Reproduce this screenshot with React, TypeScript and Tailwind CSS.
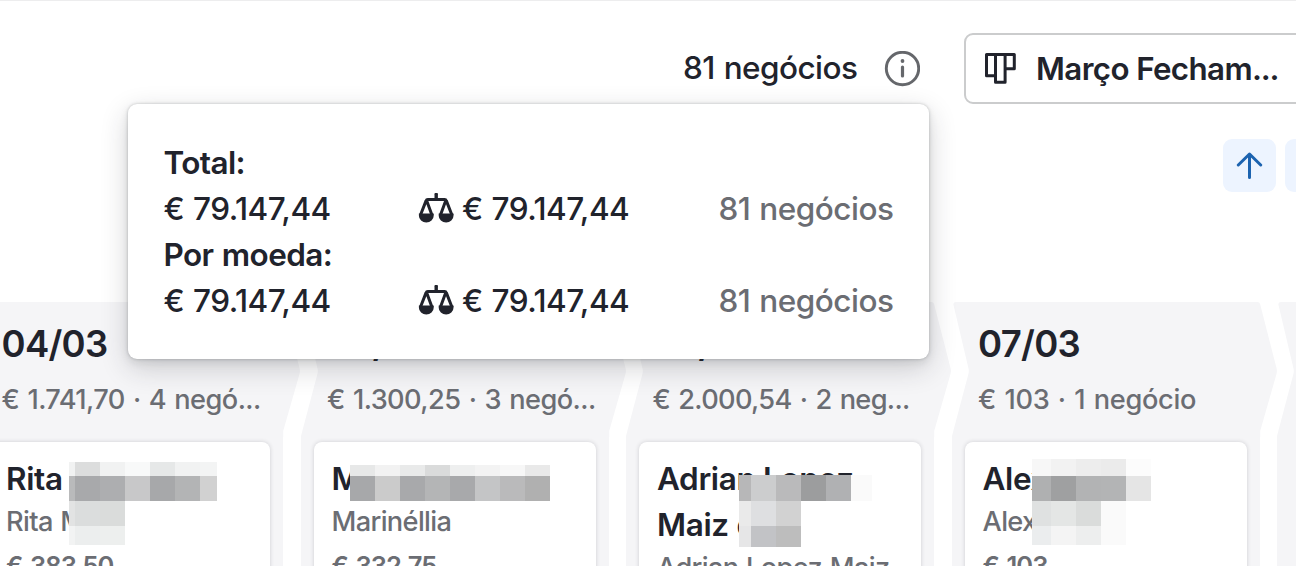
import { FC, ReactNode } from 'react'

type MosaicRow = {
  height: number
  cells: [width: number, color: string][]
}

type Deal = {
  title: ReactNode
  contact: string
  amount?: string
  mosaic: MosaicRow[]
  mosaicClass: string
}

type Stage = {
  name: string
  summary: string
  summaryClass: string
  deal?: Deal
}

const STAGES: Stage[] = [
  {
    name: '04/03',
    summary: '€ 1.741,70 · 4 negó...',
    summaryClass: 'tracking-[-0.56px]',
    deal: {
      title: 'Rita',
      contact: 'Rita M',
      amount: '€ 383,50',
      mosaicClass: 'left-[81px] top-[20px]',
      mosaic: [
        {
          height: 14,
          cells: [[6, '#f1f2f2'], [25, '#dcdddd'], [25, '#f1f2f2'], [25, '#f8f9f9'], [25, '#e6e8e8'], [25, '#f1f2f2'], [17, '#f3f4f4']],
        },
        {
          height: 25,
          cells: [[6, '#b9babb'], [25, '#a8a9ab'], [25, '#adaeb0'], [25, '#c8c8c9'], [25, '#a7a8aa'], [25, '#b3b4b5'], [17, '#d1d1d1']],
        },
        { height: 25, cells: [[6, '#e2e3e3'], [25, '#dbdddd'], [25, '#dadcdb']] },
        { height: 19, cells: [[6, '#f2f3f3'], [25, '#eceeee'], [25, '#edefee']] },
      ],
    },
  },
  {
    name: '05/03',
    summary: '€ 1.300,25 · 3 negó...',
    summaryClass: 'tracking-[-0.56px]',
    deal: {
      title: 'M',
      contact: 'Marinéllia',
      amount: '€ 332,75',
      mosaicClass: 'left-[36.5px] top-[23px]',
      mosaic: [
        {
          height: 11,
          cells: [[25, '#e7e8e8'], [25, '#f2f2f2'], [25, '#e9eaea'], [25, '#dadbdb'], [25, '#eeefef'], [25, '#f3f3f3'], [25, '#f7f7f7'], [25, '#e9e9e9']],
        },
        {
          height: 25,
          cells: [[25, '#a7a8aa'], [25, '#cbcbcb'], [25, '#a8a9ab'], [25, '#b4b5b6'], [25, '#a8a9ab'], [25, '#c4c5c6'], [25, '#bababb'], [25, '#b0b0b0']],
        },
      ],
    },
  },
  {
    name: '06/03',
    summary: '€ 2.000,54 · 2 neg...',
    summaryClass: 'tracking-[-0.66px]',
    deal: {
      title: (
        <>
          Adrian Lopez
          <br />
          Maiz d
        </>
      ),
      contact: 'Adrian Lopez Maiz',
      mosaicClass: 'left-[99.5px] top-[33px]',
      mosaic: [
        {
          height: 26,
          cells: [[12, '#b7b7b8'], [25, '#cccdce'], [25, '#bababb'], [25, '#9c9d9e'], [25, '#b0b1b3'], [21, '#fafafa']],
        },
        { height: 25, cells: [[12, '#eaeaea'], [25, '#dedfe1'], [25, '#d2d2d2']] },
        { height: 21, cells: [[12, '#e6e6e7'], [25, '#c2c3c6'], [25, '#bdbdbd']] },
      ],
    },
  },
  {
    name: '07/03',
    summary: '€ 103 · 1 negócio',
    summaryClass: 'tracking-[-0.3px]',
    deal: {
      title: 'Alex',
      contact: 'Alex',
      amount: '€ 103',
      mosaicClass: 'left-[67.5px] top-[17px]',
      mosaic: [
        { height: 17, cells: [[19, '#f7f7f7'], [25, '#f2f2f2'], [25, '#ededed'], [25, '#ebebeb'], [25, '#fcfcfc']] },
        { height: 25, cells: [[19, '#afb0b1'], [25, '#9fa0a1'], [25, '#b2b3b4'], [25, '#b3b4b5'], [25, '#e5e5e5']] },
        { height: 25, cells: [[19, '#dfe1e1'], [25, '#e4e6e5'], [25, '#dadcdb'], [25, '#fafafa']] },
        { height: 19, cells: [[19, '#ebedee'], [25, '#f4f4f4'], [25, '#edeeee'], [25, '#fafafa']] },
      ],
    },
  },
  { name: '', summary: '', summaryClass: '' },
]

const TOTALS = [
  { label: 'Total:', value: '€ 79.147,44', weighted: '€ 79.147,44', count: '81 negócios' },
  { label: 'Por moeda:', value: '€ 79.147,44', weighted: '€ 79.147,44', count: '81 negócios' },
]

const InfoIcon: FC = () => (
  <svg className="h-9 w-9 shrink-0" viewBox="0 0 36 36" fill="none">
    <circle cx="18.5" cy="17.5" r="16.2" stroke="#65676b" strokeWidth="2.9" />
    <circle cx="18.5" cy="10" r="1.9" fill="#65676b" />
    <path d="M18.5 16v9" stroke="#65676b" strokeWidth="3.2" strokeLinecap="round" />
  </svg>
)

const PipelineIcon: FC = () => (
  <svg className="h-8 w-8 shrink-0" viewBox="0 0 32 32" fill="none" stroke="#21232c" strokeWidth="3" strokeLinejoin="round">
    <path d="M2.5 1.500h9v21.200h-9zM11.500 1.500h9.600v27.700h-9.600zM21.100 1.500h9.200v14.200h-9.200z" />
  </svg>
)

const ScalesIcon: FC = () => (
  <svg className="h-8 w-9 shrink-0" viewBox="0 0 36 32" fill="none">
    <path d="M18.2 1.300v5" stroke="#21232c" strokeWidth="3.4" strokeLinecap="round" />
    <path
      d="M2.300 22.500 8 7.900Q8.500 6.500 9.800 6.500h16.800q1.300 0 1.800 1.400L34.100 22.500M8.800 8l5.300 14.500M27.600 8 22.300 22.500"
      stroke="#21232c"
      strokeWidth="3"
    />
    <path d="M.9 20.500h14.800v2.300a7.400 6.800 0 0 1-14.800 0zM20.700 20.500h14.800v2.300a7.400 6.800 0 0 1-14.800 0z" fill="#21232c" />
  </svg>
)

const Mosaic: FC<{ rows: MosaicRow[]; className: string }> = ({ rows, className }) => (
  <div className={`absolute ${className}`}>
    {rows.map((row, rowIndex) => (
      <div key={rowIndex} className="flex" style={{ height: row.height }}>
        {row.cells.map(([width, color], index) => (
          <span key={index} className="h-full shrink-0" style={{ width, backgroundColor: color }} />
        ))}
      </div>
    ))}
  </div>
)

const DealCard: FC<{ deal: Deal }> = ({ deal }) => (
  <div className="relative ml-[13px] mt-[5px] h-[160px] w-[282px] rounded-[8px] bg-white pl-[18px] pt-[14px] shadow-[0_0_4px_rgba(33,35,44,0.18)]">
    <div className="text-[31.5px] font-semibold leading-[46px] tracking-[-0.35px] text-[#21232c]">{deal.title}</div>
    <div className="mt-px whitespace-nowrap text-[27.2px] leading-[37px] tracking-[-0.65px] text-[#6b6d73] [word-spacing:1px]">
      {deal.contact}
    </div>
    {deal.amount && (
      <div className="mt-[3px] text-[25.5px] font-semibold leading-[46px] tracking-[-0.9px] text-[#6b6d73] [word-spacing:2px]">
        {deal.amount}
      </div>
    )}
    <Mosaic rows={deal.mosaic} className={deal.mosaicClass} />
  </div>
)

const StageColumn: FC<{ stage: Stage }> = ({ stage }) => (
  <div className="w-[325.5px] shrink-0">
    <div className="relative h-[135px]">
      <svg className="absolute left-0 top-0 h-[135px] w-[326px]" viewBox="0 0 326 135" fill="#f5f5f7">
        <path d="M4 0H305.500q2 0 2.600 2L324.500 66q.8 3 0 6L308.200 129V135H0V134L16.400 72q.8-3 0-6L1.500 3Q.8 0 4 0z" />
      </svg>
      <div className="relative pl-[26.5px] pt-[19.5px]">
        <div className="h-[46px] text-[36.5px] font-semibold leading-[46px] tracking-[-0.7px] text-[#21232c]">{stage.name}</div>
        <div
          className={`mt-[14px] whitespace-nowrap text-[27.2px] leading-[38px] text-[#6b6d73] [word-spacing:1.5px] ${stage.summaryClass}`}>
          {stage.summary}
        </div>
      </div>
    </div>
    <div className="h-[140px] w-[308px] overflow-hidden bg-[#f5f5f7]">{stage.deal && <DealCard deal={stage.deal} />}</div>
  </div>
)

const TotalsPopover: FC = () => (
  <div className="absolute left-[128px] top-[103px] h-[255px] w-[801px] rounded-[9px] bg-white pl-[35.5px] pt-[35.5px] text-[31.5px] leading-[46.2px] tracking-[-0.5px] shadow-[0_0_3px_rgba(33,35,44,0.25),0_3px_8px_rgba(33,35,44,0.1),0_9px_28px_rgba(33,35,44,0.2)] [word-spacing:1px]">
    {TOTALS.map(total => (
      <div key={total.label}>
        <div className="font-semibold tracking-[-0.6px]">{total.label}</div>
        <div className="flex items-center whitespace-nowrap">
          <span className="w-[254.5px]">{total.value}</span>
          <ScalesIcon />
          <span className="ml-2 w-[256.5px]">{total.weighted}</span>
          <span className="text-[#6b6d73]">{total.count}</span>
        </div>
      </div>
    ))}
  </div>
)

const App: FC = () => (
  <div className="relative flex h-[566px] w-[1296px] flex-col overflow-hidden border-t border-[#ededee] bg-white font-['Inter',sans-serif] font-[450] text-[#21232c] [font-variation-settings:'opsz'_14]">
    <div className="mt-8 flex h-[71px] shrink-0 items-center pl-[683px]">
      <span className="mb-px w-[201px] shrink-0 whitespace-nowrap text-[31.5px] tracking-[-0.55px] [word-spacing:1px]">81 negócios</span>
      <InfoIcon />
      <div className="ml-11 flex h-[71px] w-[400px] shrink-0 items-center gap-5 rounded-[9px] border-2 border-[#cbcccd] pl-[18px]">
        <PipelineIcon />
        <span className="mt-px whitespace-nowrap text-[31.3px] font-semibold tracking-[-0.6px]">
          Março Fecham<span className="tracking-[-1.2px]">...</span>
        </span>
      </div>
    </div>

    <div className="mt-[35px] flex h-[53px] shrink-0 gap-[9px] pl-[1223px]">
      <div className="flex h-[53px] w-[53px] shrink-0 items-center justify-center rounded-[9px] bg-[#edf4ff]">
        <svg className="h-7 w-7" viewBox="0 0 28 28" fill="none" stroke="#1c63b0" strokeWidth="3" strokeLinecap="round" strokeLinejoin="round">
          <path d="M13.500 25.500V2M2.300 13 13.500 2l11.200 11" />
        </svg>
      </div>
      <div className="h-[53px] w-[53px] shrink-0 rounded-[9px] bg-[#edf4ff]" />
    </div>

    <div className="-ml-[25px] mt-[109.5px] flex">
      {STAGES.map((stage, index) => (
        <StageColumn key={index} stage={stage} />
      ))}
    </div>

    <TotalsPopover />
  </div>
)

export default App
